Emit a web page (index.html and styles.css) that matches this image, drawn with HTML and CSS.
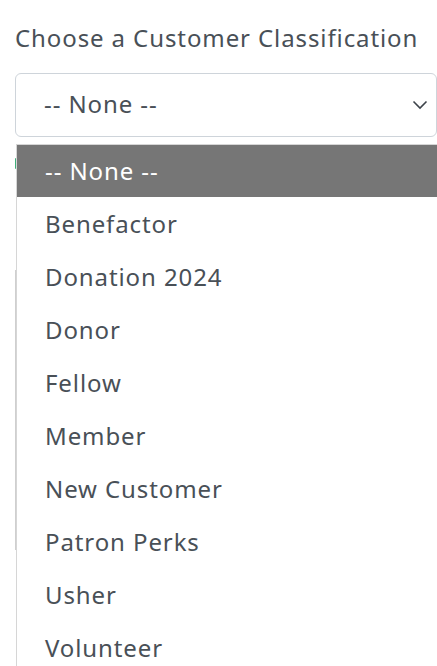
FILE: index.html
```html
<!DOCTYPE html>
<html>
<head>
<meta charset="utf-8">
<link rel="stylesheet" href="styles.css">
</head>
<body>
<div class="page">
  <div class="label">Choose a Customer Classification</div>
  <div class="select">
    <span class="select-text">-- None --</span>
    <svg class="chev" width="16" height="10" viewBox="0 0 16 10"><path d="M1.5 1.5 L8 8 L14.5 1.5" fill="none" stroke="#3d434a" stroke-width="1.6"/></svg>
  </div>
  <div class="behind">
    <div class="green-mark"></div>
    <div class="gray-bar"></div>
  </div>
  <ul class="dropdown">
    <li class="opt selected">-- None --</li>
    <li class="opt">Benefactor</li>
    <li class="opt">Donation 2024</li>
    <li class="opt">Donor</li>
    <li class="opt">Fellow</li>
    <li class="opt">Member</li>
    <li class="opt">New Customer</li>
    <li class="opt">Patron Perks</li>
    <li class="opt">Usher</li>
    <li class="opt">Volunteer</li>
  </ul>
</div>
</body>
</html>
```
FILE: styles.css
```css
html, body {
  margin: 0;
  padding: 0;
  background: #ffffff;
  overflow: hidden;
}
body {
  width: 437px;
  height: 666px;
  font-family: "Noto Sans", "Open Sans", sans-serif;
  color: #495057;
  letter-spacing: 0.9px;
}
.page {
  position: relative;
  padding-left: 15px;
  height: 666px;
}
.label {
  font-size: 24px;
  line-height: 36px;
  padding-top: 20px;
  height: 36px;
}
.select {
  margin-top: 17px;
  box-sizing: border-box;
  width: 422px;
  height: 64px;
  border: 1px solid #ced4da;
  border-radius: 6px;
  display: flex;
  align-items: center;
  justify-content: space-between;
  padding: 0 8px 0 28px;
}
.select-text {
  font-size: 24px;
  line-height: 36px;
  margin-top: -2px;
}
.chev {
  display: block;
}
.behind {
  position: relative;
  height: 430px;
}
.green-mark {
  margin-top: 21px;
  width: 2px;
  height: 11px;
  background: #3fae7a;
  border-radius: 1px;
}
.gray-bar {
  margin-top: 101px;
  width: 2px;
  height: 280px;
  background: #cfcfcf;
}
.dropdown {
  position: absolute;
  top: 144px;
  left: 16px;
  width: 430px;
  margin: 0;
  padding: 0;
  list-style: none;
  background: #ffffff;
  border-left: 1px solid #d6d6d6;
  border-top: 1px solid #d6d6d6;
}
.opt {
  height: 53px;
  line-height: 54px;
  padding-left: 28px;
  font-size: 24px;
  color: #495057;
}
.opt.selected {
  height: 52px;
  line-height: 51px;
  background: #767676;
  color: #ffffff;
}
```
